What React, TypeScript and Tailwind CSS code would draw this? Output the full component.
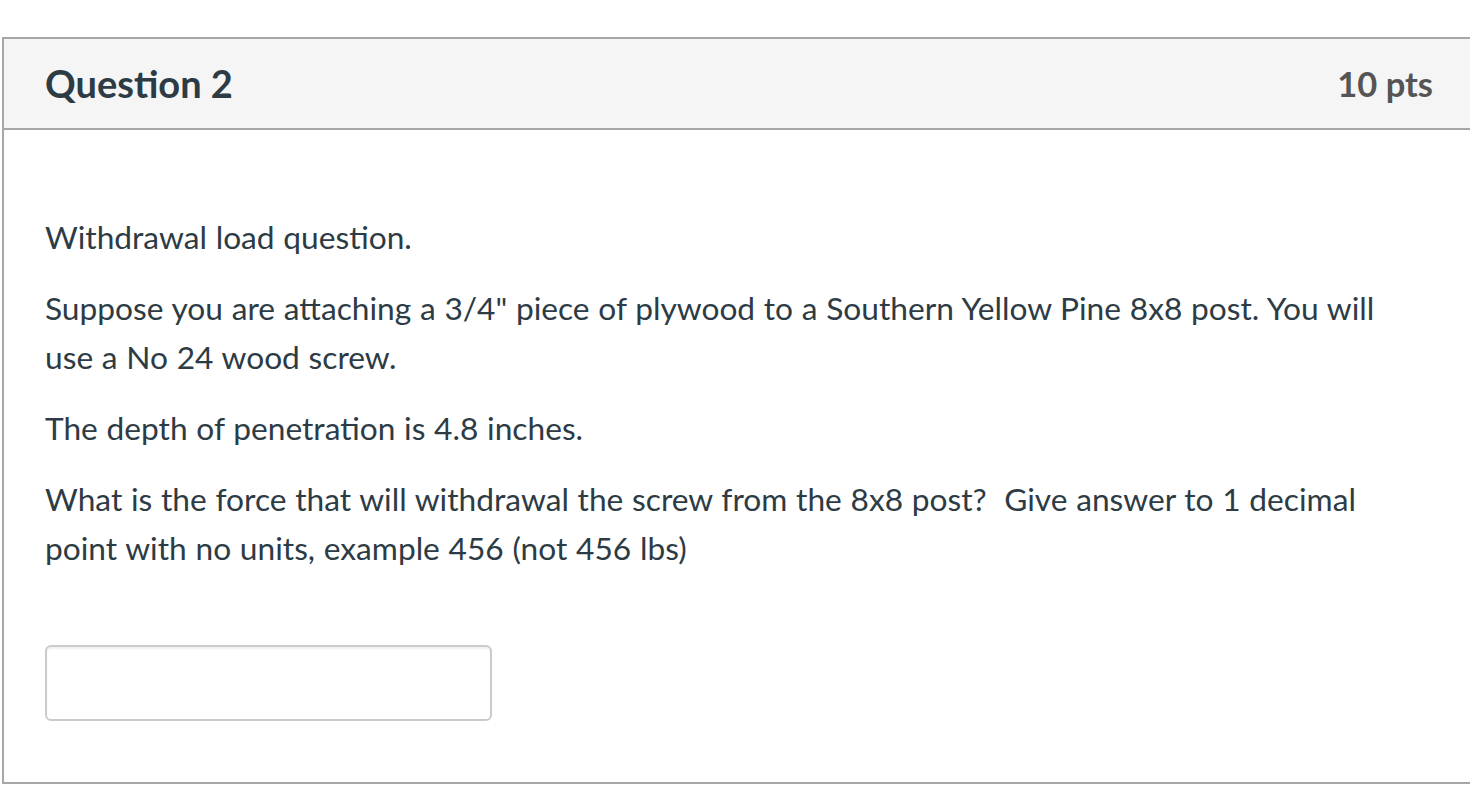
export default function App() {
  return (
    <div className="min-h-screen overflow-hidden bg-white pt-[37px] pl-[2px]" style={{ fontFamily: "Lato, 'Noto Sans', sans-serif" }}>
      <div className="w-[1490px] border-2 border-[#a7a7a7] bg-white">
        {/* header */}
        <div className="flex h-[91px] items-center justify-between border-b-2 border-[#a7a7a7] bg-[#f5f5f5] pl-[41px] pr-[57px]">
          <h2 className="text-[38px] font-bold text-[#2d3b45]">Question 2</h2>
          <div className="text-[34.5px] font-bold text-[#555]">10 pts</div>
        </div>

        {/* body */}
        <div className="pl-[41px] pt-[83px] pb-[61px] text-[31.7px] leading-[49px] text-[#2d3b45] [word-spacing:0.6px]">
          <p>Withdrawal load question.</p>
          <p className="mt-[22px] max-w-[1360px]">
            Suppose you are attaching a 3/4" piece of plywood to a Southern Yellow Pine 8x8 post. You will use a No 24 wood screw.
          </p>
          <p className="mt-[22px]">The depth of penetration is 4.8 inches.</p>
          <p className="mt-[22px] max-w-[1360px]">
            What is the force that will withdrawal the screw from the 8x8 post?&nbsp; Give answer to 1 decimal point with no units, example 456 (not 456 lbs)
          </p>

          <input
            type="text"
            className="mt-[72px] block h-[76px] w-[447px] rounded-[6px] border-2 border-[#cbcbcb] bg-white shadow-[inset_0_2px_2px_rgba(0,0,0,0.06)] outline-none"
          />
        </div>
      </div>
    </div>
  );
}
